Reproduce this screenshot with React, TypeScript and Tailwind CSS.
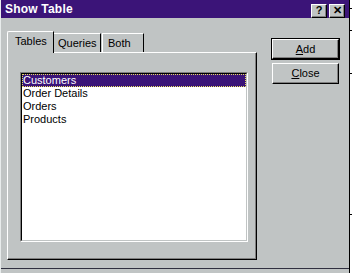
import React from "react";

const items = ["Customers", "Order Details", "Orders", "Products"];

export default function App() {
  return (
    <div className="w-[352px] h-[273px] bg-[#c0c4c4] flex overflow-hidden font-['Liberation_Sans',Arial,sans-serif] text-[11px] text-black leading-none">
      <div className="w-[349px] flex flex-col border-l border-l-[#e8ecec]">
        {/* title bar */}
        <div className="h-[18px] bg-[#3b1478] flex items-center pl-[4px] pr-[4px]">
          <span className="text-white font-bold text-[12px] tracking-[0.2px]">Show Table</span>
          <div className="ml-auto flex gap-[2px] mt-[3px]">
            <div className="w-[16px] h-[14px] bg-[#c0c4c4] border border-t-white border-l-white border-b-black border-r-black shadow-[inset_-1px_-1px_0_#808080] flex items-center justify-center font-bold text-[11px]">?</div>
            <div className="w-[16px] h-[14px] bg-[#c0c4c4] border border-t-white border-l-white border-b-black border-r-black shadow-[inset_-1px_-1px_0_#808080] flex items-center justify-center font-bold text-[11px]">✕</div>
          </div>
        </div>

        {/* content */}
        <div className="h-[250px] flex pl-[6px] pt-[13px]">
          {/* tab control */}
          <div className="w-[250px] flex flex-col">
            <div className="h-[21px] flex items-end">
              <div className="h-[22px] w-[47px] -mb-px relative z-10 bg-[#c0c4c4] border-t border-l border-r border-t-white border-l-white border-r-black rounded-tl-[2px] flex items-center pl-[7px] pb-[2px]">
                Tables
              </div>
              <div className="h-[19px] w-[47px] bg-[#c0c4c4] border-t border-r border-t-white border-r-black flex items-center pl-[4px]">
                Queries
              </div>
              <div className="h-[19px] w-[42px] ml-[1px] bg-[#c0c4c4] border-t border-l border-r border-t-white border-l-white border-r-black flex items-center pl-[5px]">
                Both
              </div>
            </div>
            <div className="h-[208px] border border-t-white border-l-white border-b-black border-r-black shadow-[inset_-1px_-1px_0_#808080]">
              <div className="ml-[12px] mt-[19px] w-[228px] h-[170px] bg-white border border-t-[#808080] border-l-[#808080] border-b-white border-r-white">
                <div className="w-full h-full border border-t-black border-l-black border-b-[#c0c4c4] border-r-[#c0c4c4] pt-0">
                  {items.map((name, i) => (
                    <div
                      key={name}
                      className={
                        i === 0
                          ? "h-[13px] bg-[#3b1478] text-white flex items-center pl-[1px] outline outline-1 outline-dotted outline-[#e8e060] -outline-offset-1"
                          : "h-[13px] flex items-center pl-[1px]"
                      }
                    >
                      {name}
                    </div>
                  ))}
                </div>
              </div>
            </div>
          </div>

          {/* buttons */}
          <div className="ml-[14px] mt-[7px] flex flex-col gap-[3px]">
            <div className="w-[69px] h-[22px] border border-black">
              <div className="w-full h-full border border-t-white border-l-white border-b-black border-r-black shadow-[inset_-1px_-1px_0_#808080] flex items-center justify-center">
                <span><span className="underline">A</span>dd</span>
              </div>
            </div>
            <div className="ml-[1px] w-[67px] h-[21px] border border-t-white border-l-white border-b-black border-r-black shadow-[inset_-1px_-1px_0_#808080] flex items-center justify-center">
              <span><span className="underline">C</span>lose</span>
            </div>
          </div>
        </div>
        <div className="h-px bg-[#303040]" />
      </div>
      <div className="w-[3px] h-full bg-white border-l border-l-black flex flex-col">
        <div className="h-px bg-black mt-[8px]" />
        <div className="h-px bg-black mt-[21px]" />
        <div className="h-px bg-black mt-[42px]" />
        <div className="h-px bg-black mt-[140px]" />
      </div>
    </div>
  );
}
